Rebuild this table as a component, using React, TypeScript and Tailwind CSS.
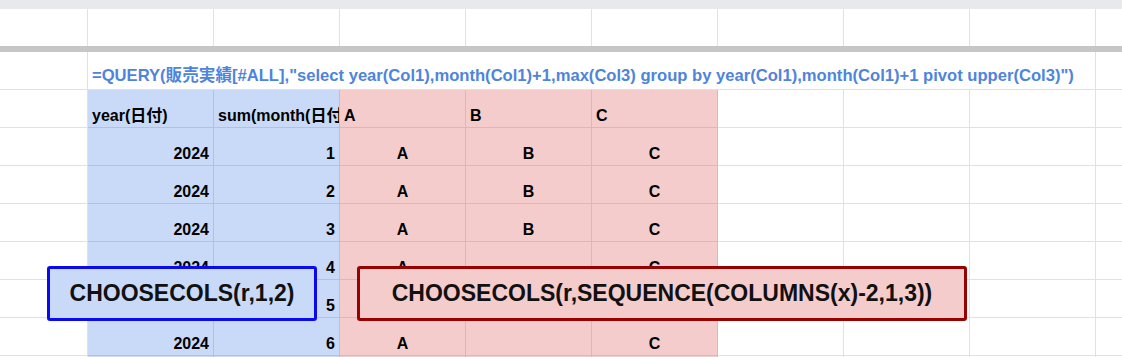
const FONT = "font-['Liberation_Sans','Noto_Sans_CJK_JP',sans-serif]";

const TONE = {
  white: "bg-white border-[#e1e1e1]",
  blue: "bg-[#c9daf8] border-[#acc2e9]",
  red: "bg-[#f4cccc] border-[#dfb5b5]",
};

type Tone = keyof typeof TONE;

const WIDTHS = ["w-[88px]", "w-[126px]", "w-[126px]", "w-[126px]", "w-[126px]", "w-[126px]", "w-[126px]", "w-[126px]", "w-[126px]"];
const TONES: Tone[] = ["white", "blue", "blue", "red", "red", "red", "white", "white", "white"];

const header = ["year(日付)", "sum(month(日付))", "A", "B", "C"];
const rows = [
  ["2024", "1", "A", "B", "C"],
  ["2024", "2", "A", "B", "C"],
  ["2024", "3", "A", "B", "C"],
  ["2024", "4", "A", "", "C"],
  ["2024", "5", "A", "", "C"],
  ["2024", "6", "A", "", "C"],
  ["", "", "", "", ""],
];

function Cell({ i, align, bottom = true, children }: { i: number; align?: string; bottom?: boolean; children?: React.ReactNode }) {
  return (
    <div
      className={`${WIDTHS[i]} ${TONE[TONES[i]]} shrink-0 h-full border-r ${bottom ? "border-b" : ""} flex items-end ${align ?? "justify-start"} px-[4px] pb-[3px] overflow-hidden`}
    >
      {children !== undefined && children !== "" && (
        <span className="text-[16px] leading-none font-bold text-black whitespace-nowrap">{children}</span>
      )}
    </div>
  );
}

function Rest({ bottom = true }: { bottom?: boolean }) {
  return <div className={`flex-1 h-full bg-white ${bottom ? "border-b" : ""} border-[#e1e1e1]`} />;
}

export default function App() {
  return (
    <div className={`${FONT} relative w-[1122px] h-[357px] overflow-hidden bg-white`}>
      <div className="h-[9px] bg-[#e8e9ed]" />

      <div className="flex h-[37px]">
        {WIDTHS.map((_, i) => (
          <div key={i} className={`${WIDTHS[i]} shrink-0 h-full bg-white border-r border-[#e1e1e1]`} />
        ))}
        <Rest bottom={false} />
      </div>

      <div className="h-[6px] bg-[#c6c6c6]" />

      <div className="flex h-[38px]">
        <div className="w-[88px] shrink-0 h-full border-r border-b border-[#e1e1e1]" />
        <div className="w-[1008px] shrink-0 h-full border-r border-b border-[#e1e1e1] flex items-end px-[4px] pb-[4px]">
          <span className="text-[16.6px] leading-none font-bold text-[#4f84dc] whitespace-nowrap">
            =QUERY(販売実績[#ALL],"select year(Col1),month(Col1)+1,max(Col3) group by year(Col1),month(Col1)+1 pivot upper(Col3)")
          </span>
        </div>
        <Rest />
      </div>

      <div className="flex h-[38px]">
        <Cell i={0} />
        {header.map((h, k) => (
          <Cell key={k} i={k + 1}>
            {h}
          </Cell>
        ))}
        <Cell i={6} />
        <Cell i={7} />
        <Cell i={8} />
        <Rest />
      </div>

      {rows.map((r, n) => (
        <div key={n} className="flex h-[38px]">
          <Cell i={0} />
          <Cell i={1} align="justify-end">{r[0]}</Cell>
          <Cell i={2} align="justify-end">{r[1]}</Cell>
          <Cell i={3} align="justify-center">{r[2]}</Cell>
          <Cell i={4} align="justify-center">{r[3]}</Cell>
          <Cell i={5} align="justify-center">{r[4]}</Cell>
          <Cell i={6} />
          <Cell i={7} />
          <Cell i={8} />
          <Rest />
        </div>
      ))}

      <div className="absolute left-[47px] top-[266px] w-[270px] h-[55px] border-[3px] border-[#0a0af0] rounded-[3px] bg-[#c9daf8] flex items-center justify-center">
        <span className="text-[23px] font-bold text-[#111]">CHOOSECOLS(r,1,2)</span>
      </div>
      <div className="absolute left-[357px] top-[266px] w-[610px] h-[55px] border-[3px] border-[#990000] rounded-[3px] bg-[#f4cccc] flex items-center justify-center">
        <span className="text-[23px] font-bold text-[#111]">CHOOSECOLS(r,SEQUENCE(COLUMNS(x)-2,1,3))</span>
      </div>
    </div>
  );
}
